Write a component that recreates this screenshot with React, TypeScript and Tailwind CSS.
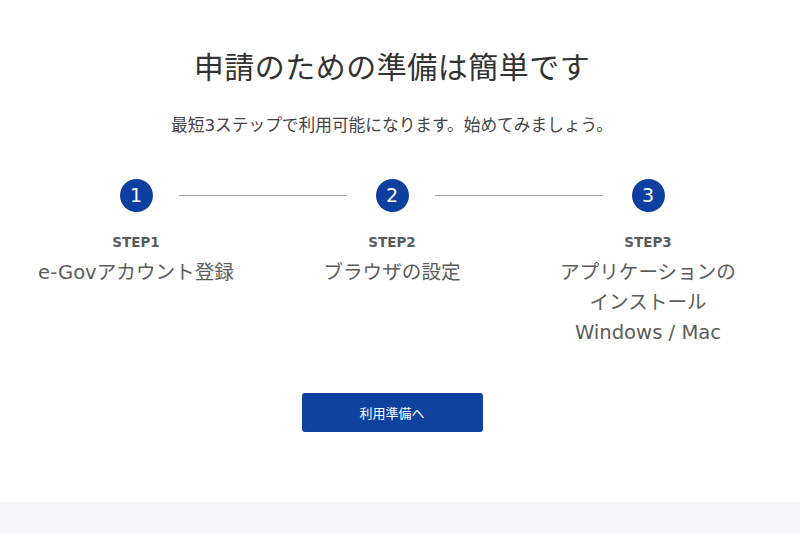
const steps = [
  { label: 'STEP1', lines: ['e-Govアカウント登録'] },
  { label: 'STEP2', lines: ['ブラウザの設定'] },
  { label: 'STEP3', lines: ['アプリケーションの', 'インストール', 'Windows / Mac'] },
];

function StepCircle({ n }: { n: number }) {
  return (
    <div className="w-[33px] h-[33px] rounded-full bg-[#0c3f9f] text-white flex items-center justify-center text-[19px] leading-none shrink-0">
      {n}
    </div>
  );
}

function Connector() {
  return <div className="ml-[26px] mr-[29px] w-[168px] h-px bg-[#a3a3a3] shrink-0" />;
}

export default function App() {
  return (
    <div className="bg-white font-['DejaVu_Sans','Noto_Sans_CJK_JP',sans-serif]">
      <section className="pr-4 pt-[45px] pb-[70px]">
        <div className="mx-auto w-[768px] flex flex-col items-center">
          <h1 className="text-[30px] leading-[45px] font-normal text-[#333] tracking-[0.5px]">
            申請のための準備は簡単です
          </h1>
          <p className="mt-[23px] text-[16.7px] leading-[24px] text-[#444]">
            最短3ステップで利用可能になります。始めてみましょう。
          </p>

          {/* Progress */}
          <div className="mt-[42px] flex items-center justify-center">
            <StepCircle n={1} />
            <Connector />
            <StepCircle n={2} />
            <Connector />
            <StepCircle n={3} />
          </div>

          <div className="grid grid-cols-3 w-full">
            {steps.map((s) => (
              <div key={s.label} className="flex flex-col items-center text-center">
                <p className="mt-[20px] text-[13.5px] leading-[20px] font-bold text-[#5a5a5a]">{s.label}</p>
                <div className="mt-[6px] text-[19.6px] leading-[30px] text-[#5c5c5c]">
                  {s.lines.map((l) => (
                    <p key={l}>{l}</p>
                  ))}
                </div>
              </div>
            ))}
          </div>

          <button className="mt-[45px] w-[181px] h-[39px] rounded-[3px] bg-[#0d42a0] text-white text-[13px] font-['Noto_Sans_CJK_JP',sans-serif]">
            利用準備へ
          </button>
        </div>
      </section>
      <footer className="h-[31px] bg-[#f4f5f7]" />
    </div>
  );
}
